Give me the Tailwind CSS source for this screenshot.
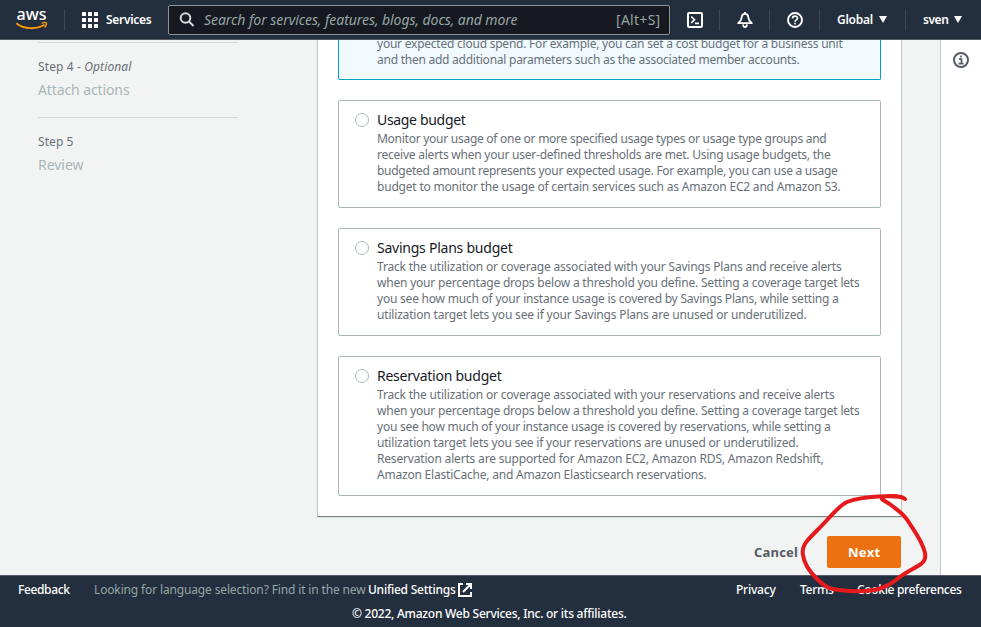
<!DOCTYPE html>
<html lang="en">
<head>
<meta charset="utf-8">
<title>AWS Budgets</title>
<script src="https://cdn.jsdelivr.net/npm/@tailwindcss/browser@4"></script>
</head>
<body class="w-[981px] h-[627px] overflow-hidden relative flex flex-col bg-white font-['Noto_Sans',sans-serif] text-[12px] leading-4 whitespace-nowrap text-[#687078]">

<header class="h-10 shrink-0 flex items-center bg-[#232f3e] border-b border-[#545b64] text-white text-[12px] font-medium">
  <div class="w-[65px] h-[22px] border-r border-[#414750] shrink-0 pl-[16px]">
    <svg class="w-8 h-[22px] overflow-visible" viewBox="0 0 32 22">
      <text x="0.5" y="11" font-family="Noto Sans" font-size="16.500" font-weight="500" fill="#fff" textLength="30" lengthAdjust="spacingAndGlyphs">aws</text>
      <path d="M0.300 14.200C8 20.400 20 20.800 28.500 15.800" fill="none" stroke="#f90" stroke-width="1.800"/>
      <path d="M25.600 14.300C28 13.300 30 13.400 30.300 14C30.700 15 29.900 17 28.600 18.500" fill="none" stroke="#f90" stroke-width="1.400"/>
    </svg>
  </div>
  <svg class="ml-[17px] w-4 h-4" viewBox="0 0 16 16" fill="#fff">
    <rect width="4" height="4" rx=".6"/><rect x="6" width="4" height="4" rx=".6"/><rect x="12" width="4" height="4" rx=".6"/>
    <rect y="6" width="4" height="4" rx=".6"/><rect x="6" y="6" width="4" height="4" rx=".6"/><rect x="12" y="6" width="4" height="4" rx=".6"/>
    <rect y="12" width="4" height="4" rx=".6"/><rect x="6" y="12" width="4" height="4" rx=".6"/><rect x="12" y="12" width="4" height="4" rx=".6"/>
  </svg>
  <div class="ml-2 w-[62px] font-semibold tracking-[-0.3px]">Services</div>
  <div class="w-[502px] h-[30px] bg-[#16191f] border border-[#879596] rounded-xs flex items-center text-[#95a5a6] text-[14px] font-normal">
    <svg class="ml-[10px] w-4 h-4" viewBox="0 0 16 16" fill="none" stroke="#d5dbdb" stroke-width="2"><circle cx="6.500" cy="6" r="4.800"/><path d="M10 9.500L14.500 14"/></svg>
    <div class="ml-[9px] flex-1 italic tracking-[-0.063px]">Search for services, features, blogs, docs, and more</div>
    <div class="w-[53px] tracking-[0.28px]">[Alt+S]</div>
  </div>
  <div class="w-[50px] h-[22px] border-r border-[#414750] flex items-center pl-[17px]">
    <svg class="w-4 h-4" viewBox="0 0 16 16" fill="none" stroke="#fff" stroke-width="2"><rect x="1" y="1" width="14" height="14" rx="1"/><path d="M4.200 4.500L7.500 7.700L4.200 11M8 11.300H12" stroke-width="1.700"/></svg>
  </div>
  <div class="w-[50px] h-[22px] border-r border-[#414750] flex items-center pl-[17px]">
    <svg class="w-4 h-4" viewBox="0 0 16 16" fill="none" stroke="#fff" stroke-width="1.800" stroke-linejoin="round"><path d="M8 1.800C5.800 1.800 4.800 3.500 4.700 5.400C4.500 8 3.500 9.300 1.200 11.200H14.800C12.500 9.300 11.500 8 11.300 5.400C11.200 3.500 10.200 1.800 8 1.800Z"/><path d="M6 12.300Q6.300 15 8 15T10 12.300M8 0V2"/></svg>
  </div>
  <div class="w-[50px] h-[22px] border-r border-[#414750] flex items-center pl-[17px]">
    <svg class="w-4 h-4" viewBox="0 0 16 16" fill="none" stroke="#fff" stroke-width="1.900"><circle cx="8" cy="8" r="7"/><path d="M5.500 6.500C5.500 3.400 10.500 3.400 10.500 6.200C10.500 7.900 8 7.800 8 9.800M8 10.800V12.500" stroke-width="1.600"/></svg>
  </div>
  <div class="w-[86px] h-[22px] border-r border-[#414750] flex items-center pl-[17px]">
    <div class="w-[42px] font-semibold tracking-[-0.25px]">Global</div>
    <svg class="w-2 h-[7px]" viewBox="0 0 8 7" fill="#fff"><path d="M0 0H8L4 7Z"/></svg>
  </div>
  <div class="flex items-center pl-[17px]">
    <div class="w-[31px] font-semibold tracking-[-0.45px]">sven</div>
    <svg class="w-2 h-[7px]" viewBox="0 0 8 7" fill="#fff"><path d="M0 0H8L4 7Z"/></svg>
  </div>
</header>

<main class="h-[535px] shrink-0 flex overflow-hidden">
  <div class="w-[941px] flex bg-[#f2f3f3] border-r border-[#c4c8c8]">
    <nav class="ml-[38px] w-[200px] mr-[79px] pt-[2px] shrink-0">
      <div class="border-t border-[#d5dbdb] h-[75px] pt-4">
        <div class="tracking-[0.12px]">Step 4 - <i>Optional</i></div>
        <div class="mt-[5px] text-[14px] leading-5 text-[#aab7b8] tracking-[-0.107px]">Attach actions</div>
      </div>
      <div class="border-t border-[#d5dbdb] pt-4">
        <div class="tracking-[0.07px]">Step 5</div>
        <div class="mt-[5px] text-[14px] leading-5 text-[#aab7b8] tracking-[-0.03px]">Review</div>
      </div>
    </nav>
    <div class="w-[585px]">
      <section class="h-[477px] bg-white border border-t-0 border-[#c4c8c8] border-b-[#778487] shadow-[0_1px_1px_#00000018] px-5">
        <div class="h-10 overflow-hidden border border-t-0 border-[#00a1c9] rounded-b-xs bg-[#f1faff] flex flex-col justify-end pb-[11px] pl-[38px]">
          <div class="tracking-[-0.23px]">your expected cloud spend. For example, you can set a cost budget for a business unit</div>
          <div class="tracking-[-0.248px]">and then add additional parameters such as the associated member accounts.</div>
        </div>
        <label class="mt-5 h-[108px] border border-[#aab7b8] rounded-xs flex pl-4 pt-[9px]">
          <span class="mt-[3px] mr-2 size-[14px] rounded-full border border-[#aab7b8] shrink-0"></span>
          <div>
            <div class="text-[14px] h-[21px] leading-5 text-[#16191f] tracking-[-0.323px]">Usage budget</div>
            <div class="tracking-[-0.263px]">Monitor your usage of one or more specified usage types or usage type groups and</div>
            <div class="tracking-[-0.233px]">receive alerts when your user-defined thresholds are met. Using usage budgets, the</div>
            <div class="tracking-[-0.274px]">budgeted amount represents your expected usage. For example, you can use a usage</div>
            <div class="tracking-[-0.197px]">budget to monitor the usage of certain services such as Amazon EC2 and Amazon S3.</div>
          </div>
        </label>
        <label class="mt-5 h-[108px] border border-[#aab7b8] rounded-xs flex pl-4 pt-[9px]">
          <span class="mt-[3px] mr-2 size-[14px] rounded-full border border-[#aab7b8] shrink-0"></span>
          <div>
            <div class="text-[14px] h-[21px] leading-5 text-[#16191f] tracking-[-0.237px]">Savings Plans budget</div>
            <div class="tracking-[-0.186px]">Track the utilization or coverage associated with your Savings Plans and receive alerts</div>
            <div class="tracking-[-0.203px]">when your percentage drops below a threshold you define. Setting a coverage target lets</div>
            <div class="tracking-[-0.217px]">you see how much of your instance usage is covered by Savings Plans, while setting a</div>
            <div class="tracking-[-0.179px]">utilization target lets you see if your Savings Plans are unused or underutilized.</div>
          </div>
        </label>
        <label class="mt-5 h-[140px] border border-[#aab7b8] rounded-xs flex pl-4 pt-[9px]">
          <span class="mt-[3px] mr-2 size-[14px] rounded-full border border-[#aab7b8] shrink-0"></span>
          <div>
            <div class="text-[14px] h-[21px] leading-5 text-[#16191f] tracking-[-0.24px]">Reservation budget</div>
            <div class="tracking-[-0.19px]">Track the utilization or coverage associated with your reservations and receive alerts</div>
            <div class="tracking-[-0.203px]">when your percentage drops below a threshold you define. Setting a coverage target lets</div>
            <div class="tracking-[-0.235px]">you see how much of your instance usage is covered by reservations, while setting a</div>
            <div class="tracking-[-0.196px]">utilization target lets you see if your reservations are unused or underutilized.</div>
            <div class="tracking-[-0.18px]">Reservation alerts are supported for Amazon EC2, Amazon RDS, Amazon Redshift,</div>
            <div class="tracking-[-0.209px]">Amazon ElastiCache, and Amazon Elasticsearch reservations.</div>
          </div>
        </label>
      </section>
      <div class="mt-[19px] h-8 flex items-center justify-end text-[13px] font-bold text-[#545b64]">
        <div class="w-[73px] tracking-[0.2px]">Cancel</div>
        <div class="w-[74px] mr-px h-8 rounded-xs bg-[#ec7211] text-white flex items-center pl-[21px] tracking-[0.3px]">Next</div>
      </div>
    </div>
  </div>
  <aside class="flex-1 bg-white pt-3 pl-3">
    <svg class="w-4 h-4" viewBox="0 0 16 16" fill="none" stroke="#545b64" stroke-width="2"><circle cx="8" cy="8" r="7"/><path d="M8 3.500V5.500M6 7.200H8.500V11.500M5.500 11.700H10.500" stroke-width="1.700"/></svg>
  </aside>
</main>

<footer class="h-[52px] shrink-0 bg-[#232f3e] border-t border-[#545b64] text-white font-medium pt-[6px]">
  <div class="flex h-4">
    <div class="ml-[18px] w-[76px] tracking-[-0.371px]">Feedback</div>
    <div class="w-[274px] font-normal text-[#95a5a6] tracking-[-0.145px]">Looking for language selection? Find it in the new</div>
    <div class="w-[90px] tracking-[-0.237px]">Unified Settings</div>
    <svg class="w-[14px] h-[14px] mt-[1px]" viewBox="0 0 14 14" fill="none" stroke="#fff" stroke-width="2"><path d="M5 1H1V13H13V9M8 1H13V6M12.500 1.500L5 9"/></svg>
    <div class="ml-[264px] w-16 tracking-[-0.223px]">Privacy</div>
    <div class="w-[57px] tracking-[-0.316px]">Terms</div>
    <div class="tracking-[-0.33px]">Cookie preferences</div>
  </div>
  <div class="mt-2 pl-[352px] tracking-[-0.247px]">© 2022, Amazon Web Services, Inc. or its affiliates.</div>
</footer>

<svg class="absolute left-[740px] top-[480px] w-[241px] h-[147px]" viewBox="0 0 241 147" fill="none" stroke="#e51a1c" stroke-width="4" stroke-linecap="round" stroke-linejoin="round">
  <path d="M165 19C160 15 148 16 138 16.500C128 17 115 19 107 22C100 25 91 36 87 40C80 48 72 55 67 61C63 66 62 70 63 75C64 84 71 93 77 99C82 104 87 108 93 109C105 111 113 112 125 111C139 110 147 107 156 100C165 92 174 89 181 84C185 81 186 78 185 73C183 62 173 49 168 41C163 33 156 29 151 25C147 22 144 21 142 19"/>
</svg>
</body>
</html>
